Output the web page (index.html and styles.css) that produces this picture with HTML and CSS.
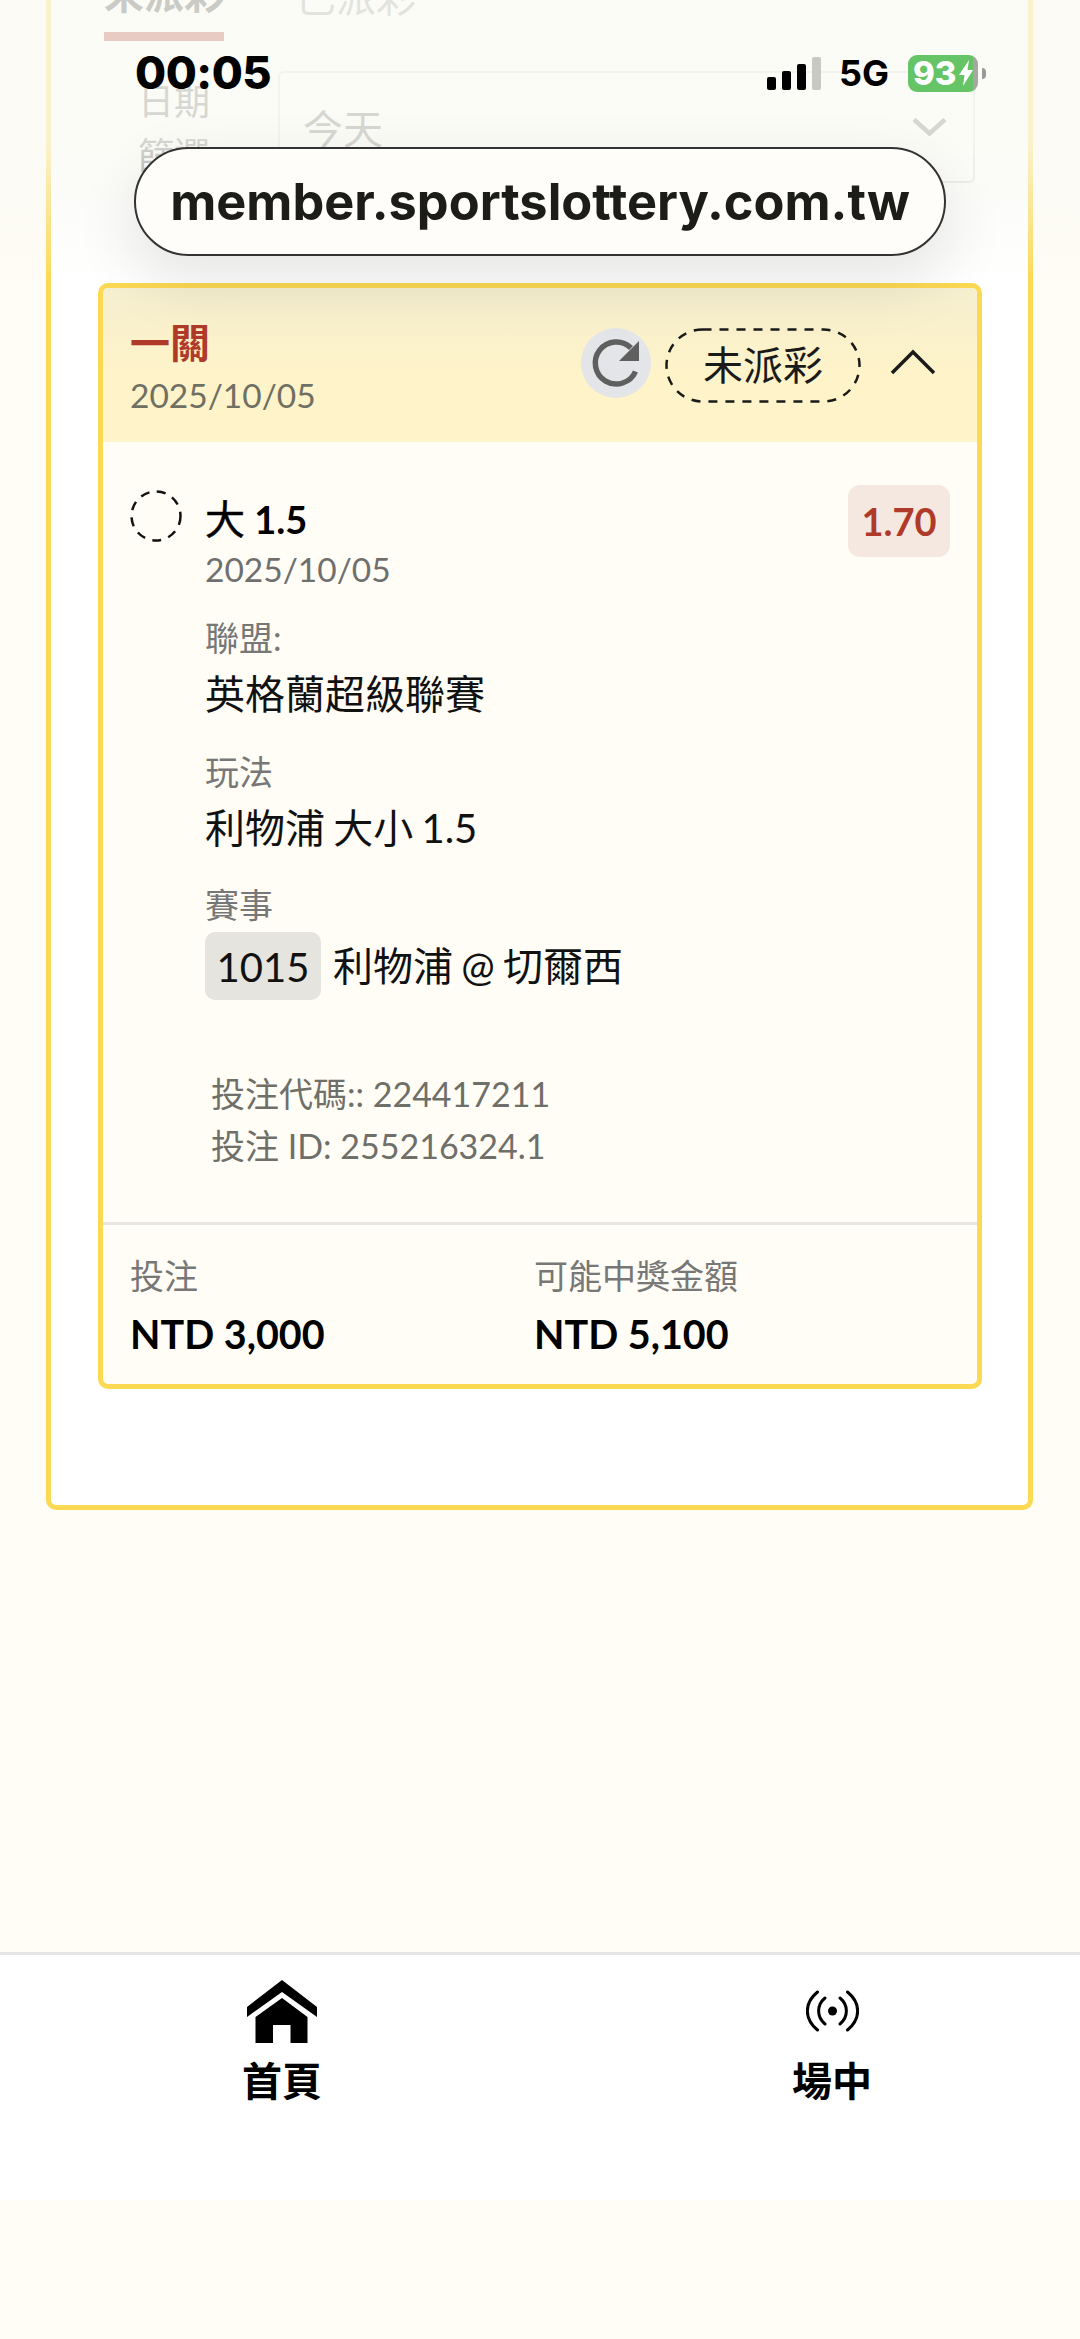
FILE: index.html
```html
<!DOCTYPE html>
<html lang="zh-Hant">
<head>
    <meta charset="UTF-8">
    <meta name="viewport" content="width=device-width, initial-scale=1.0">
    <title>member.sportslottery.com.tw</title>
    <link rel="stylesheet" href="styles.css">
</head>
<body>
    <div class="page">
        <div class="outer-card">
            <!-- Tabs, mostly scrolled away -->
            <div class="tabs">
                <div class="tab tab-active">未派彩</div>
                <div class="tab">已派彩</div>
            </div>

            <!-- Date filter -->
            <div class="filter">
                <div class="filter-label">日期<br>篩選</div>
                <div class="filter-select">
                    <span>今天</span>
                    <svg class="filter-arrow" viewBox="0 0 35 18" width="35" height="18"><path d="M2 1.500l15.500 14L33 1.500" fill="none" stroke="#666" stroke-width="4.500"/></svg>
                </div>
            </div>

            <!-- Bet card -->
            <div class="bet-card">
                <div class="bet-header">
                    <div class="bet-heading">
                        <div class="bet-title">一關</div>
                        <div class="bet-date">2025/10/05</div>
                    </div>
                    <div class="bet-actions">
                        <div class="refresh">
                            <svg viewBox="0 0 70 70" width="70" height="70"><path d="M54.500 43.500A21 21 0 1 1 50 20" fill="none" stroke="#5f5f5f" stroke-width="5.500"/><path d="M58 13V33H38z" fill="#5f5f5f"/></svg>
                        </div>
                        <div class="status-pill">
                            <svg class="pill-outline" viewBox="0 0 196 75" width="196" height="75"><rect x="1.500" y="1.500" width="193" height="72" rx="36" fill="none" stroke="#1a1a1a" stroke-width="2.500" stroke-dasharray="9 8"/></svg>
                            未派彩
                        </div>
                        <svg class="collapse" viewBox="0 0 46 26" width="46" height="26"><path d="M2 24L23 3l21 21" fill="none" stroke="#1a1a1a" stroke-width="3.500"/></svg>
                    </div>
                </div>

                <div class="bet-body">
                    <div class="selection">
                        <svg class="selection-mark" viewBox="0 0 52 52" width="52" height="52"><circle cx="26" cy="26" r="24.500" fill="none" stroke="#111" stroke-width="2.500" stroke-dasharray="9 7.500"/></svg>
                        <div class="selection-main">
                            <div class="selection-name"><span>大</span> 1.5</div>
                            <div class="selection-date">2025/10/05</div>
                        </div>
                        <div class="odds">1.70</div>
                    </div>

                    <div class="detail">
                        <div class="detail-label">聯盟:</div>
                        <div class="detail-value">英格蘭超級聯賽</div>
                    </div>
                    <div class="detail">
                        <div class="detail-label">玩法</div>
                        <div class="detail-value">利物浦 大小 1.5</div>
                    </div>
                    <div class="detail detail-match">
                        <div class="detail-label">賽事</div>
                        <div class="detail-value match"><span class="match-no">1015</span>利物浦 @ 切爾西</div>
                    </div>

                    <div class="codes">
                        <div>投注代碼:: 224417211</div>
                        <div>投注 ID: 255216324.1</div>
                    </div>
                </div>

                <div class="bet-footer">
                    <div class="amount">
                        <div class="amount-label">投注</div>
                        <div class="amount-value">NTD 3,000</div>
                    </div>
                    <div class="amount">
                        <div class="amount-label">可能中獎金額</div>
                        <div class="amount-value">NTD 5,100</div>
                    </div>
                </div>
            </div>
        </div>

        <!-- Bottom navigation -->
        <nav class="bottom-nav">
            <div class="nav-item">
                <div class="nav-icon">
                    <svg viewBox="0 0 70 63" width="70" height="63"><path d="M35 0L70 27V37L35 12 0 37V27z"/><path d="M35 18L60.500 37V63H43.500V45H26V63H8.500V37z"/></svg>
                </div>
                <span>首頁</span>
            </div>
            <div class="nav-item">
                <div class="nav-icon">
                    <svg viewBox="0 0 53 42" width="53" height="42"><circle cx="26.500" cy="21" r="4.500"/><path d="M19 8C10.500 15 10.500 27 19 34M34 8c8.500 7 8.500 19 0 26M11.500 2C-2 13-2 29 11.500 40M41.500 2c13.500 11 13.500 27 0 38" fill="none" stroke="#000" stroke-width="3" stroke-linecap="round"/></svg>
                </div>
                <span>場中</span>
            </div>
        </nav>
    </div>

    <!-- Browser chrome lying over the page -->
    <div class="top-veil"></div>
    <div class="status-bar">
        <span class="clock">00:05</span>
        <div class="status-right">
            <div class="signal"><i class="bar-1"></i><i class="bar-2"></i><i class="bar-3"></i><i class="bar-4"></i></div>
            <span class="network">5G</span>
            <div class="battery"><span>93</span><svg viewBox="0 0 14 26" width="14" height="26"><path d="M10 0L0 15h5.500L4 26 14 10H8.500z" fill="#fff"/></svg></div>
            <div class="battery-cap"></div>
        </div>
    </div>
    <div class="url-pill">member.sportslottery.com.tw</div>
</body>
</html>
```

FILE: styles.css
```css
/* Basic reset */
* {
    margin: 0;
    padding: 0;
    box-sizing: border-box;
}

body {
    font-family: Lato, "Noto Sans CJK TC", sans-serif;
    background-color: #fffdf5;
    color: #000;
    height: 2339px;
    overflow: hidden;
}

.page {
    display: flex;
    flex-direction: column;
}

/* Outer card, its top is scrolled off the screen */
.outer-card {
    height: 1550px;
    margin: -40px 47px 0 46px;
    padding: 0 46px 0 47px;
    background-color: #fff;
    border: 5px solid #fcd952;
    border-radius: 10px;
}

.tabs {
    display: flex;
    height: 76px;
    padding: 6px 0 0 6px;
    gap: 72px;
}

.tab {
    width: 120px;
    padding-top: 3px;
    font-size: 40px;
    line-height: 46px;
    color: #999;
    text-align: center;
}

.tab-active {
    height: 70px;
    padding-top: 0;
    font-weight: 700;
    color: #333;
    border-bottom: 9px solid #b03a2a;
}

.filter {
    display: flex;
    gap: 68px;
    height: 142px;
    padding: 30px 7px 0 40px;
}

.filter-label {
    margin-top: 3px;
    font-size: 36px;
    line-height: 54px;
    color: #666;
}

.filter-select {
    flex: 1;
    height: 112px;
    padding: 0 26px 0 23px;
    display: flex;
    align-items: center;
    justify-content: space-between;
    border: 2px solid #ddd;
    border-radius: 6px;
    font-size: 40px;
    color: #666;
}

/* Bet card */
.bet-card {
    margin-top: 100px;
    background-color: #fffdf5;
    border: 5px solid #fcd952;
    border-radius: 10px;
    overflow: hidden;
}

.bet-header {
    display: flex;
    justify-content: space-between;
    height: 154px;
    padding: 0 27px;
    background: linear-gradient(#f6efcf, #fef3c9 55%);
}

.bet-title {
    margin-top: 32px;
    font-size: 40px;
    line-height: 46px;
    font-weight: 700;
    color: #b03a2a;
}

.bet-date {
    margin-top: 9px;
    font-size: 33.500px;
    line-height: 40px;
    color: #6f6f63;
}

.bet-actions {
    display: flex;
    align-items: center;
    height: 154px;
}

.refresh {
    width: 70px;
    height: 70px;
    margin-top: -4px;
    background-color: #e4e5e8;
    border-radius: 50%;
}

.status-pill {
    position: relative;
    width: 196px;
    height: 75px;
    margin-left: 14px;
    font-size: 40px;
    line-height: 74px;
    text-align: center;
    color: #1a1a1a;
}

.pill-outline {
    position: absolute;
    top: 0;
    left: 0;
}

.collapse {
    margin-left: 29px;
    margin-right: 14px;
    margin-top: -6px;
}

/* Selection */
.bet-body {
    padding: 43px 27px 0;
    height: 780px;
}

.selection {
    display: flex;
    align-items: flex-start;
}

.selection-mark {
    flex: none;
    margin-top: 5px;
}

.selection-main {
    flex: 1;
    margin-left: 23px;
}

.selection-name {
    margin-top: 11px;
    font-size: 38px;
    line-height: 46px;
    font-weight: 700;
}

.selection-name span {
    font-size: 40px;
    font-weight: 400;
    -webkit-text-stroke: 0.5px #000;
}

.selection-date {
    margin-top: 7px;
    font-size: 33.500px;
    line-height: 40px;
    color: #6f6f6f;
}

.odds {
    width: 102px;
    height: 72px;
    background-color: #f4e8e0;
    border-radius: 12px;
    font-size: 38px;
    line-height: 72px;
    font-weight: 700;
    text-align: center;
    color: #b03a2a;
}

.detail {
    margin-left: 75px;
    padding-top: 33px;
}

.detail:nth-child(2) {
    padding-top: 30px;
}

.detail-match {
    padding-top: 32px;
}

.detail-label {
    font-size: 34px;
    line-height: 38px;
    color: #777;
}

.detail-value {
    margin-top: 12px;
    font-size: 40px;
    line-height: 51px;
    word-spacing: -2px;
    color: #111;
}

.match {
    display: flex;
    align-items: center;
    margin-top: 8px;
}

.match-no {
    width: 116px;
    height: 68px;
    margin-right: 12px;
    background-color: #e6e4de;
    border-radius: 10px;
    line-height: 70px;
    text-align: center;
}

.codes {
    margin: 68px 0 0 81px;
    font-size: 34px;
    line-height: 52px;
    color: #6f6f6a;
}

.bet-footer {
    display: flex;
    height: 162px;
    padding: 30px 27px 0;
    border-top: 3px solid #e8e6e0;
}

.amount {
    width: 404px;
}

.amount-label {
    font-size: 34px;
    line-height: 42px;
    color: #777;
}

.amount-value {
    margin-top: 12px;
    font-size: 39.500px;
    line-height: 50px;
    font-weight: 700;
}

/* Bottom navigation */
.bottom-nav {
    display: flex;
    justify-content: space-between;
    height: 248px;
    margin-top: 442px;
    padding: 24px 208px 0 242px;
    background-color: #fff;
    border-top: 3px solid #e5e5e5;
}

.nav-item {
    display: flex;
    flex-direction: column;
    align-items: center;
    width: 80px;
    font-family: "Noto Sans CJK TC", sans-serif;
    font-size: 40px;
    line-height: 48px;
    font-weight: 700;
}

.nav-icon {
    display: flex;
    align-items: center;
    justify-content: center;
    height: 64px;
    margin-bottom: 12px;
}

/* Browser chrome */
.top-veil {
    position: absolute;
    top: 0;
    left: 0;
    width: 1080px;
    height: 284px;
    background: linear-gradient(rgba(250, 250, 244, 0.76) 50%, rgba(248, 248, 243, 0.55) 65%, rgba(245, 245, 242, 0));
}

.status-bar {
    position: absolute;
    top: 48px;
    left: 135px;
    width: 851px;
    display: flex;
    justify-content: space-between;
    align-items: center;
    font-family: Inter, sans-serif;
}

.clock {
    font-size: 45px;
    line-height: 50px;
    font-weight: 800;
    letter-spacing: -0.5px;
}

.status-right {
    display: flex;
    align-items: center;
}

.signal {
    display: flex;
    align-items: flex-end;
    gap: 6px;
    height: 33px;
}

.signal i {
    width: 9px;
    border-radius: 2px;
    background-color: #000;
}

.bar-1 { height: 13px; }
.bar-2 { height: 19px; }
.bar-3 { height: 26px; }
.signal .bar-4 { height: 33px; background-color: #c8c8c4; }

.network {
    margin-left: 18px;
    font-size: 36px;
    font-weight: 700;
}

.battery {
    display: flex;
    align-items: center;
    gap: 2px;
    width: 70px;
    height: 37px;
    margin-left: 19px;
    padding-left: 5px;
    background: linear-gradient(to right, #65c466 65px, #a5a89f 65px);
    border-radius: 9px;
    font-size: 33px;
    font-weight: 800;
    color: #fff;
}

.battery-cap {
    width: 4px;
    height: 11px;
    margin-left: 4px;
    background-color: #999;
    border-radius: 0 5px 5px 0;
}

.url-pill {
    position: absolute;
    top: 147px;
    left: 134px;
    width: 812px;
    height: 109px;
    background-color: #fefdf9;
    border: 2px solid #333;
    border-radius: 55px;
    box-shadow: 0 24px 60px 6px rgba(0, 0, 0, 0.09);
    font-family: Inter, sans-serif;
    font-size: 50.500px;
    line-height: 105px;
    font-weight: 700;
    text-align: center;
    color: #1c1c18;
}
```
